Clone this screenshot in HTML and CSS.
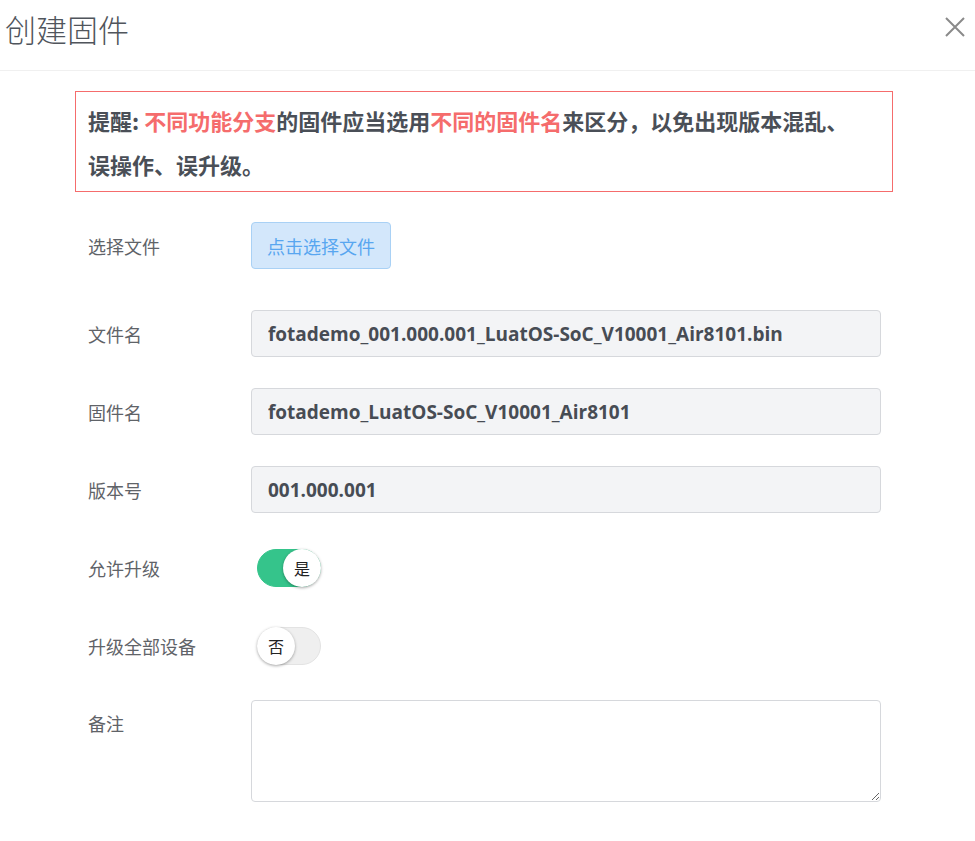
FILE: index.html
```html
<!DOCTYPE html>
<html lang="zh-CN">
<head>
  <meta charset="UTF-8">
  <meta name="viewport" content="width=device-width, initial-scale=1.0">
  <title>创建固件</title>
  <link rel="stylesheet" href="styles.css">
</head>
<body>
  <div class="dialog">
    <!-- 标题栏 -->
    <div class="dialog-header">
      <span class="dialog-title">创建固件</span>
      <button class="close-btn" aria-label="关闭">
        <svg width="20" height="20" viewBox="0 0 20 20">
          <path d="M1 1 L19 19 M19 1 L1 19" stroke="#8a8a8a" stroke-width="2" fill="none"/>
        </svg>
      </button>
    </div>

    <div class="dialog-body">
      <!-- 提醒 -->
      <div class="notice">
        提醒: <span class="red">不同功能分支</span>的固件应当选用<span class="red">不同的固件名</span>来区分，以免出现版本混乱、误操作、误升级。
      </div>

      <form class="form">
        <div class="row row-file">
          <label class="label">选择文件</label>
          <button type="button" class="pick-btn">点击选择文件</button>
        </div>

        <div class="row">
          <label class="label">文件名</label>
          <input class="input" type="text" value="fotademo_001.000.001_LuatOS-SoC_V10001_Air8101.bin" readonly>
        </div>

        <div class="row">
          <label class="label">固件名</label>
          <input class="input" type="text" value="fotademo_LuatOS-SoC_V10001_Air8101" readonly>
        </div>

        <div class="row">
          <label class="label">版本号</label>
          <input class="input" type="text" value="001.000.001" readonly>
        </div>

        <div class="row">
          <label class="label">允许升级</label>
          <span class="switch on"><span class="knob">是</span></span>
        </div>

        <div class="row">
          <label class="label">升级全部设备</label>
          <span class="switch"><span class="knob">否</span></span>
        </div>

        <div class="row row-top">
          <label class="label">备注</label>
          <textarea class="textarea"></textarea>
        </div>
      </form>
    </div>
  </div>
</body>
</html>
```

FILE: styles.css
```css
body {
  margin: 0;
  background: #fff;
  font-family: "Noto Sans CJK SC", sans-serif;
  color: #5f6368;
}

.dialog-header {
  height: 70px;
  border-bottom: 1px solid #f0f0f0;
  display: flex;
  align-items: flex-start;
  justify-content: space-between;
  padding: 0 9px 0 5px;
}
.dialog-title {
  font-size: 31px;
  font-weight: 300;
  color: #50555c;
  line-height: 31px;
  margin-top: 13px;
}
.close-btn {
  border: none;
  background: none;
  padding: 0;
  margin-top: 17px;
  width: 22px;
  height: 22px;
  cursor: pointer;
}

.dialog-body {
  padding: 20px 82px 0 75px;
}

.notice {
  border: 1px solid #f56c6c;
  padding: 6px 34px 5px 12px;
  font-size: 22px;
  font-weight: bold;
  line-height: 44px;
  color: #4a4f57;
}
.notice .red {
  color: #f56c6c;
}

.form {
  padding: 30px 12px 0 13px;
}
.row {
  display: flex;
  align-items: center;
  min-height: 47px;
  margin-bottom: 31px;
}
.row-file {
  margin-bottom: 41px;
}
.row-top {
  align-items: flex-start;
}
.row-top .label {
  line-height: 47px;
}
.label {
  width: 163px;
  flex: none;
  font-size: 18px;
  color: #5f6368;
}

.pick-btn {
  height: 47px;
  padding: 0 15px;
  background: #d3e7fb;
  border: 1px solid #a9d1f5;
  border-radius: 4px;
  color: #58a6f0;
  font-size: 18px;
  font-family: "Noto Sans CJK SC", sans-serif;
}

.input {
  flex: 1;
  height: 47px;
  box-sizing: border-box;
  padding: 0 16px;
  background: #f3f4f6;
  border: 1px solid #d6d8dc;
  border-radius: 4px;
  font-family: "Open Sans", "Noto Sans CJK SC", sans-serif;
  font-weight: bold;
  font-size: 19px;
  color: #474c54;
  outline: none;
}

.switch {
  position: relative;
  display: inline-block;
  width: 64px;
  height: 38px;
  margin-left: 6px;
  border-radius: 19px;
  background: #efefef;
  border: 1px solid #e3e3e3;
  box-sizing: border-box;
}
.switch.on {
  background: #35c48b;
  border-color: #35c48b;
}
.knob {
  position: absolute;
  top: 0;
  left: -1px;
  width: 38px;
  height: 38px;
  margin-top: -1px;
  border-radius: 50%;
  background: #fff;
  box-shadow: 0 1px 3px rgba(0, 0, 0, 0.35);
  display: flex;
  align-items: center;
  justify-content: center;
  font-size: 16px;
  color: #222;
}
.switch.on .knob {
  left: auto;
  right: -1px;
}

.textarea {
  flex: 1;
  height: 102px;
  box-sizing: border-box;
  border: 1px solid #d6d8dc;
  border-radius: 4px;
  resize: vertical;
}
```
